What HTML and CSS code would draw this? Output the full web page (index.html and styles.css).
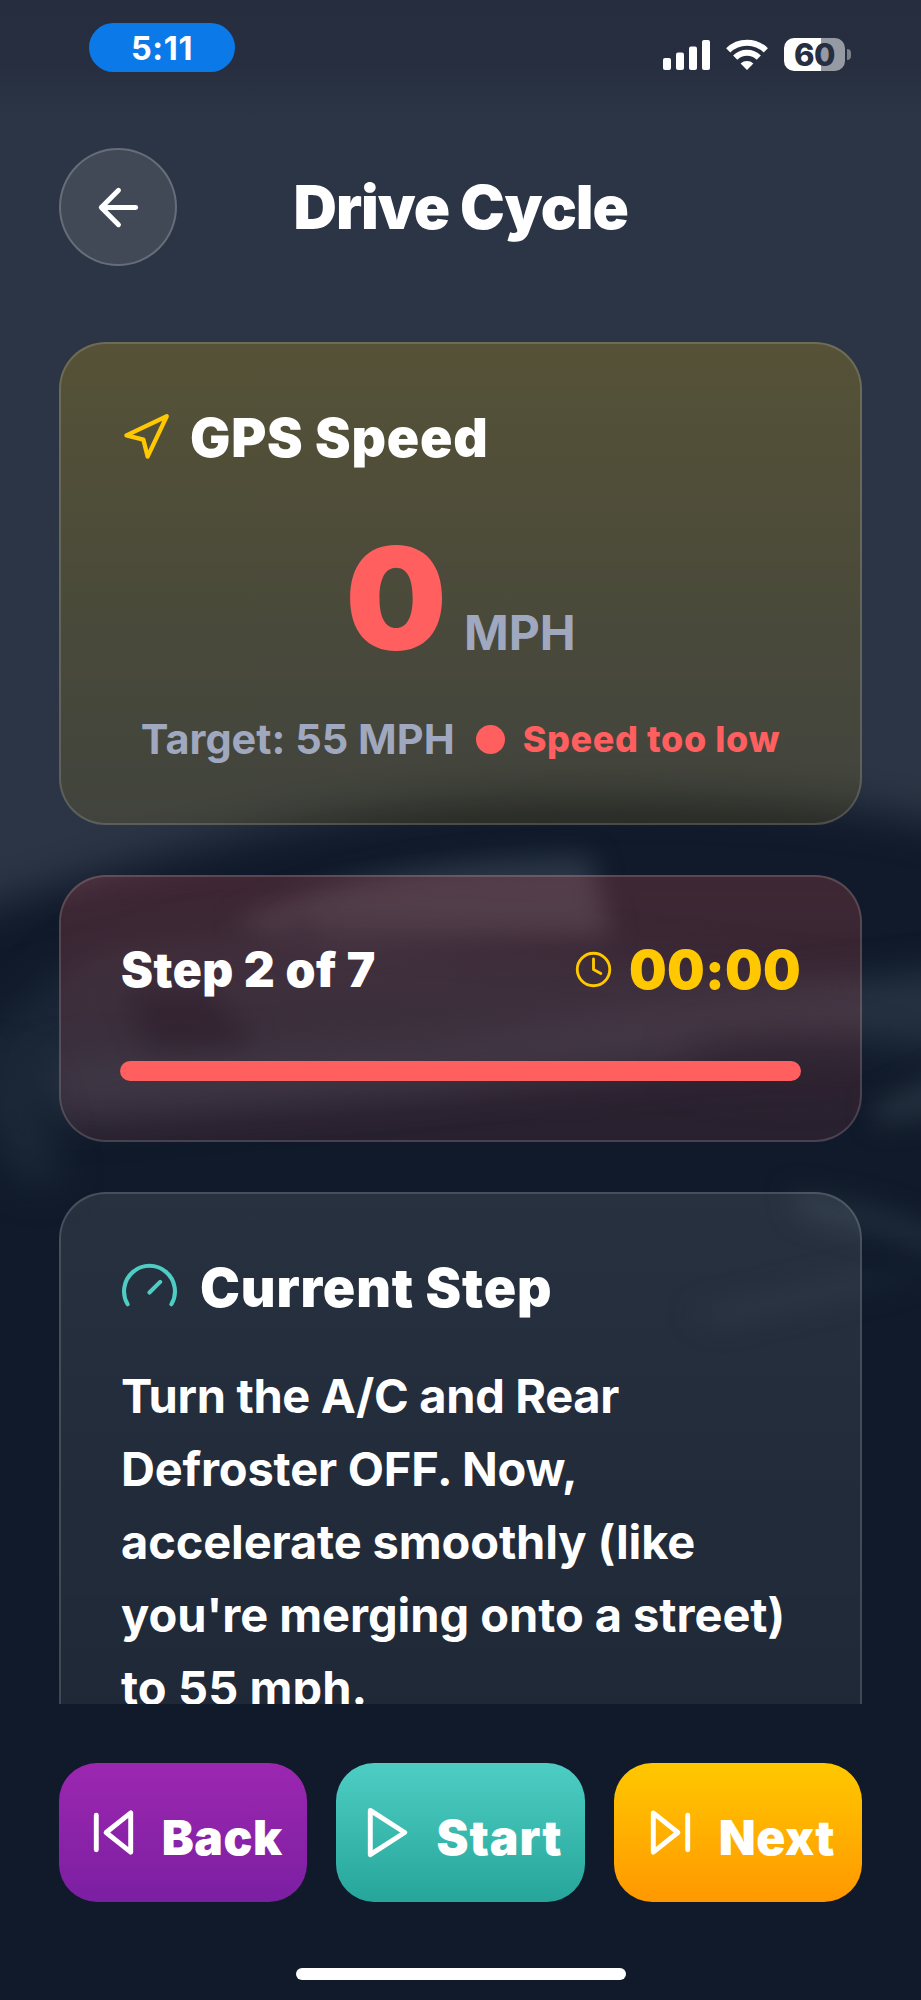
FILE: index.html
```html
<!DOCTYPE html>
<html lang="en">
<head>
<meta charset="utf-8">
<title>Drive Cycle</title>
<link rel="stylesheet" href="styles.css">
</head>
<body>
<div class="screen">
  <svg class="backdrop" viewBox="0 0 921 2000" aria-hidden="true">
    <defs>
      <filter id="b20" filterUnits="userSpaceOnUse" x="-150" y="-150" width="1250" height="1700" color-interpolation-filters="sRGB"><feGaussianBlur stdDeviation="20"/></filter>
      <filter id="b12" filterUnits="userSpaceOnUse" x="-150" y="-150" width="1250" height="1700" color-interpolation-filters="sRGB"><feGaussianBlur stdDeviation="13"/></filter>
      <linearGradient id="top" x1="0" y1="0" x2="0" y2="1">
        <stop offset="0" stop-color="#252d3e"/><stop offset=".55" stop-color="#262e3f"/><stop offset="1" stop-color="#2c3545"/>
      </linearGradient>
    </defs>
    <rect width="921" height="2000" fill="#101a2a"/>
    <path filter="url(#b20)" fill="#2c3545" d="M-80 -80H1000V845C900 800 740 796 560 796C330 798 130 860 -80 930Z"/>
    <rect width="921" height="120" fill="url(#top)"/>
    <path filter="url(#b12)" fill="#2b3646" d="M235 925C340 870 470 858 590 856L612 938C500 940 380 945 320 965Z"/>
    <path filter="url(#b20)" fill="#1b2737" d="M90 950L330 930L640 960L860 990L960 975V1050L760 1060L500 1080L60 1120L-40 1060Z"/>
    <path filter="url(#b20)" fill="#273343" d="M40 1065L420 1045L700 1005L960 975V1030L700 1050L420 1085L60 1110Z"/>
    <path filter="url(#b12)" fill="#111b2b" d="M125 990L205 985L255 1045L150 1048Z"/>
    <ellipse filter="url(#b12)" cx="300" cy="936" rx="18" ry="18" fill="#182434" opacity=".7"/>
    <ellipse filter="url(#b20)" cx="790" cy="1062" rx="110" ry="20" fill="#111b2b"/>
    <path filter="url(#b20)" fill="#1d2a39" d="M-20 1060L30 1075L62 1180H20L-20 1100Z"/>
    <path filter="url(#b12)" fill="#24303f" d="M870 1105L960 1065V1110L880 1125Z"/>
    <path filter="url(#b12)" fill="#1e2b3a" d="M790 1190L870 1205L960 1235V1262L870 1235L800 1215Z"/>
    <path filter="url(#b12)" fill="#162232" d="M690 1312L870 1270L960 1265L870 1290L720 1325Z"/>
  </svg>

  <header class="status">
    <span class="clock-pill">5:11</span>
    <div class="indicators">
      <svg class="ico-signal" viewBox="0 0 48 30" fill="#fff"><rect x="0" y="18" width="8" height="12" rx="2"/><rect x="13" y="12.500" width="8" height="17.500" rx="2"/><rect x="26" y="6.500" width="8" height="23.500" rx="2"/><rect x="39" y="0" width="8" height="30" rx="2"/></svg>
      <svg class="ico-wifi" viewBox="0 0 42 31"><g fill="none" stroke="#fff" stroke-width="6"><path d="M2.2 11.3A27 27 0 0 1 39.8 11.3"/><path d="M9.2 18.6A17 17 0 0 1 32.8 18.6"/></g><path fill="#fff" d="M21 31L14.6 24.6A9.500 9.500 0 0 1 27.4 24.6Z"/></svg>
      <div class="battery"><span class="battery-body">60</span><span class="battery-tip"></span></div>
    </div>
  </header>

  <div class="titlebar">
    <button class="round" aria-label="Go back"><svg viewBox="0 0 24 24" class="line arrow"><path d="m12 19-7-7 7-7M19 12H5"/></svg></button>
    <h1>Drive Cycle</h1>
  </div>

  <main class="scroll">
    <section class="card gps">
      <div class="head"><svg viewBox="0 0 24 24" class="line nav"><path d="M3 11 22 2 13 21 11 13 3 11Z"/></svg><h2 class="t-gps">GPS Speed</h2></div>
      <div class="speed"><span class="num">0</span><span class="unit">MPH</span></div>
      <div class="target"><span class="goal">Target: 55 MPH</span><span class="dot"></span><span class="low">Speed too low</span></div>
    </section>

    <section class="card progress">
      <div class="row">
        <h3>Step 2 of 7</h3>
        <div class="timer"><svg viewBox="0 0 24 24" class="line time"><circle cx="12" cy="12" r="10"/><path d="M12 5.500V12L16.500 14.500"/></svg><span>00:00</span></div>
      </div>
      <div class="bar"></div>
    </section>

    <section class="card step">
      <div class="head"><svg viewBox="0 0 56 56" class="line gauge"><path d="M6.5 42.5A25 25 0 1 1 49.5 42.5M28 31L38.500 20.500"/></svg><h2 class="t-step">Current Step</h2></div>
      <p><span class="l1">Turn the A/C and Rear</span><br><span class="l2">Defroster OFF. Now,</span><br><span class="l3">accelerate smoothly (like</span><br><span class="l4">you're merging onto a street)</span><br><span class="l5">to 55 mph.</span></p>
    </section>
  </main>

  <footer>
    <nav class="actions">
      <button class="btn back"><svg viewBox="0 0 24 24" class="line"><path d="M19 20 9 12 19 4V20ZM5 19V5"/></svg><span>Back</span></button>
      <button class="btn start"><svg viewBox="0 0 24 24" class="line"><path d="M5 3 19 12 5 21V3Z"/></svg><span>Start</span></button>
      <button class="btn next"><svg viewBox="0 0 24 24" class="line"><path d="M5 4 15 12 5 20V4ZM19 5V19"/></svg><span>Next</span></button>
    </nav>
    <div class="home"></div>
  </footer>
</div>
</body>
</html>
```
FILE: styles.css
```css
* { box-sizing: border-box; }
body { margin: 0; background: #101a2a; font-family: Inter, "Liberation Sans", sans-serif; color: #fff; }
h1, h2, h3, p { margin: 0; }
button { margin: 0; padding: 0; border: 0; color: inherit; font-family: inherit; }
svg { display: block; flex: none; }
.line { fill: none; stroke: currentColor; stroke-linecap: round; stroke-linejoin: round; stroke-width: 2; }

.screen { position: relative; width: 921px; height: 2000px; overflow: hidden; display: flex; flex-direction: column; }
.screen > * { position: relative; }
.screen > .backdrop { position: absolute; inset: 0; width: 921px; height: 2000px; }

.status { height: 148px; padding: 23px 70px 0 89px; display: flex; justify-content: space-between; align-items: flex-start; }
.clock-pill { width: 146px; height: 49px; padding-top: 2px; border-radius: 25px; background: #0c79e8; display: flex; align-items: center; justify-content: center; font-size: 32.5px; font-weight: 700; letter-spacing: .6px; }
.indicators { display: flex; align-items: center; padding-top: 15px; }
.ico-signal { width: 48px; height: 30px; margin-right: 15px; }
.ico-wifi { width: 42px; height: 31px; margin-right: 16px; margin-top: -1px; }
.battery { display: flex; align-items: center; gap: 2px; }
.battery-body { width: 61px; height: 33px; border-radius: 10px; background: linear-gradient(90deg, #fff 60%, #969aa3 60%); color: #262e3f; font-size: 31px; font-weight: 800; line-height: 33px; text-align: center; letter-spacing: -.5px; }
.battery-tip { width: 4px; height: 11px; border-radius: 0 5px 5px 0; background: #7c818c; }

.titlebar { display: flex; align-items: center; justify-content: space-between; height: 118px; padding: 0 293px 0 59px; }
.round { width: 118px; height: 118px; border-radius: 50%; background: rgba(255,255,255,.1); border: 2px solid rgba(255,255,255,.2); display: grid; place-items: center; }
.arrow { width: 59px; height: 59px; }
h1 { font-size: 60px; font-weight: 900; letter-spacing: -1px; white-space: nowrap; }

.scroll { height: 1438px; padding: 76px 59px 0; overflow: hidden; display: flex; flex-direction: column; gap: 50px; }
.card { flex: none; border-radius: 47px; border: 2px solid rgba(255,255,255,.15); padding: 59px; background-origin: border-box; }
.gps { height: 483px; background-image: linear-gradient(rgba(255,200,0,.2), rgba(255,200,0,.1)); }
.progress { height: 267px; background-image: linear-gradient(rgba(255,95,95,.2), rgba(255,95,95,.1)); }
.step { height: 700px; background-image: linear-gradient(rgba(255,255,255,.1), rgba(255,255,255,.05)); }

.head { display: flex; align-items: center; height: 68px; }
h2 { font-size: 53.5px; font-weight: 900; white-space: nowrap; }
.t-gps { letter-spacing: .8px; }
.t-step { letter-spacing: .85px; }
.nav { width: 51px; height: 51px; color: #ffc800; margin-right: 19px; }
.gauge { width: 57px; height: 57px; color: #4ecdc4; stroke-width: 4; margin: 4px 22px 0 1px; }

.speed { display: flex; align-items: baseline; justify-content: center; height: 160px; margin-top: 47px; line-height: 160px; }
.num { font-size: 143px; font-weight: 900; color: #ff5f5f; margin-right: 17px; }
.unit { font-size: 48px; font-weight: 700; color: #a0a8c0; }
.target { display: flex; align-items: center; justify-content: center; height: 50px; margin-top: 36px; color: #a0a8c0; white-space: nowrap; }
.goal { font-size: 41.5px; font-weight: 700; }
.dot { width: 29px; height: 29px; border-radius: 50%; background: #ff5f5f; margin: 0 18px 0 21px; }
.low { font-size: 36px; font-weight: 800; color: #ff5f5f; letter-spacing: .6px; }

.row { display: flex; align-items: center; justify-content: space-between; height: 66px; }
h3 { font-size: 48px; font-weight: 900; white-space: nowrap; letter-spacing: .5px; margin-left: 1px; }
.timer { display: flex; align-items: center; color: #ffc800; font-size: 53px; font-weight: 900; letter-spacing: .3px; }
.time { width: 39px; height: 39px; margin-right: 16px; stroke-width: 1.75; }
.timer span { padding-top: 1px; }
.bar { margin-top: 59px; height: 20px; border-radius: 10px; background: #ff5f5f; }

.step p { margin: 38px 0 0 1px; font-size: 47px; font-weight: 650; line-height: 73.100px; white-space: nowrap; }
.l1 { letter-spacing: -.33px; }
.l2 { letter-spacing: -.2px; }
.l3 { letter-spacing: -.13px; }
.l4 { letter-spacing: -.05px; }
.l5 { letter-spacing: .1px; }

footer { height: 296px; padding: 59px 59px 0; display: flex; flex-direction: column; align-items: center; }
.actions { display: grid; grid-template-columns: repeat(3, 1fr); gap: 29px; width: 100%; }
.btn { height: 139px; border-radius: 38px; display: flex; align-items: center; justify-content: center; font-size: 48px; font-weight: 900; }
.btn svg { width: 59px; height: 59px; }
.btn span { padding-top: 9px; margin-left: 19px; letter-spacing: .5px; }
.btn.start span { letter-spacing: 1px; }
.back { background: linear-gradient(#9c27b0, #7b1fa2); }
.start { background: linear-gradient(#4ecdc4, #26a69a); }
.next { background: linear-gradient(#ffc800, #ff9800); }
.home { width: 330px; height: 12px; border-radius: 6px; background: #fff; margin-top: 66px; }
```
